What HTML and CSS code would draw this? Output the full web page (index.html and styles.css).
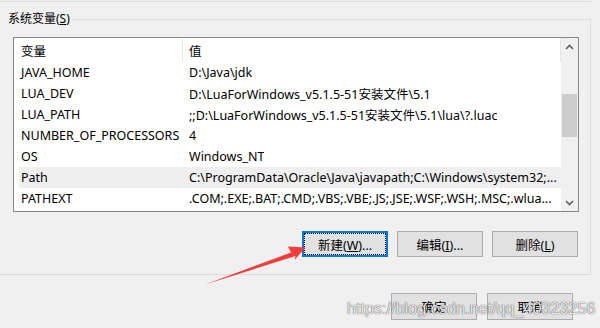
FILE: index.html
```html
<!DOCTYPE html>
<html lang="zh-CN">
<head>
    <meta charset="UTF-8">
    <title>环境变量</title>
    <link rel="stylesheet" href="styles.css">
</head>
<body>
    <div class="prev-group"></div>

    <fieldset class="group">
        <legend>系统变量(<u>S</u>)</legend>

        <div class="list">
            <div class="table">
                <div class="row head">
                    <div class="cell name">变量</div>
                    <div class="cell value">值</div>
                </div>
                <div class="row">
                    <div class="cell name">JAVA_HOME</div>
                    <div class="cell value">D:\Java\jdk</div>
                </div>
                <div class="row">
                    <div class="cell name">LUA_DEV</div>
                    <div class="cell value">D:\LuaForWindows_v5.1.5-51安装文件\5.1</div>
                </div>
                <div class="row">
                    <div class="cell name">LUA_PATH</div>
                    <div class="cell value">;;D:\LuaForWindows_v5.1.5-51安装文件\5.1\lua\?.luac</div>
                </div>
                <div class="row">
                    <div class="cell name">NUMBER_OF_PROCESSORS</div>
                    <div class="cell value">4</div>
                </div>
                <div class="row">
                    <div class="cell name">OS</div>
                    <div class="cell value">Windows_NT</div>
                </div>
                <div class="row selected">
                    <div class="cell name">Path</div>
                    <div class="cell value">C:\ProgramData\Oracle\Java\javapath;C:\Windows\system32;...</div>
                </div>
                <div class="row">
                    <div class="cell name">PATHEXT</div>
                    <div class="cell value">.COM;.EXE;.BAT;.CMD;.VBS;.VBE;.JS;.JSE;.WSF;.WSH;.MSC;.wlua...</div>
                </div>
            </div>

            <div class="scrollbar">
                <div class="arrow">
                    <svg width="9" height="6" viewBox="0 0 9 6"><polyline points="1,5 4.5,1.5 8,5" fill="none" stroke="#606060" stroke-width="1.6"/></svg>
                </div>
                <div class="track">
                    <div class="thumb"></div>
                </div>
                <div class="arrow">
                    <svg width="9" height="6" viewBox="0 0 9 6"><polyline points="1,1 4.5,4.5 8,1" fill="none" stroke="#606060" stroke-width="1.6"/></svg>
                </div>
            </div>
        </div>

        <div class="buttons">
            <button class="btn focused">新建(<u>W</u>)...</button>
            <button class="btn">编辑(<u>I</u>)...</button>
            <button class="btn">删除(<u>L</u>)</button>
        </div>
    </fieldset>

    <div class="footer">
        <button class="btn">确定</button>
        <button class="btn">取消</button>
    </div>

    <!-- annotation drawn on top of the screenshot -->
    <svg class="arrow-mark" width="600" height="328" viewBox="0 0 600 328">
        <polygon points="205,284.5 291,252.5 288,246.5 305.5,247.5 294.5,260 295.5,256" fill="#f23b3b"/>
    </svg>
    <div class="watermark">https://blog.csdn.net/qq_40323256</div>
</body>
</html>
```

FILE: styles.css
```css
body {
    margin: 0;
    width: 600px;
    height: 328px;
    overflow: hidden;
    position: relative;
    background-color: #f0f0f0;
    font-family: "Noto Sans", "Noto Sans CJK SC", sans-serif;
    font-size: 12px;
    color: #000;
}
.prev-group {
    width: 590px;
    height: 1px;
    border-bottom: 1px solid #dcdcdc;
    border-right: 1px solid #dcdcdc;
}
.group {
    box-sizing: border-box;
    width: 595px;
    margin: 9px 0 0 -4px;
    padding: 0 12px 17px 0;
    border: 1px solid #dcdcdc;
    min-width: 0;
}
.group legend {
    padding: 0 2px 0 11px;
    line-height: 16px;
}
.list {
    box-sizing: border-box;
    width: 566px;
    height: 175px;
    margin: 10px 0 0 16px;
    border: 1px solid #828790;
    background-color: #fff;
    display: flex;
}
.table {
    flex: 1;
    overflow: hidden;
    font-size: 12.5px;
}
.row {
    display: flex;
    height: 21px;
    margin-left: 5px;
    align-items: center;
    white-space: nowrap;
}
.row.head {
    height: 24px;
    align-items: stretch;
    border-right: 1px solid #e5e5e5;
}
.row.head .cell {
    display: flex;
    align-items: center;
}
.row.head .name {
    border-right: 1px solid #e5e5e5;
    margin: 1px 0;
}
.row.selected {
    background-color: #efefef;
}
.cell.name {
    box-sizing: border-box;
    width: 164px;
    padding-left: 2px;
    flex-shrink: 0;
}
.cell.value {
    padding-left: 6px;
    overflow: hidden;
}
.scrollbar {
    width: 17px;
    background-color: #f0f0f0;
    display: flex;
    flex-direction: column;
}
.arrow {
    height: 17px;
    display: flex;
    align-items: center;
    justify-content: center;
}
.track {
    flex: 1;
}
.thumb {
    margin: 39px 1px 0 1px;
    height: 43px;
    background-color: #cdcdcd;
}
.buttons {
    display: flex;
    justify-content: flex-end;
    gap: 9px;
    margin-top: 19px;
}
.btn {
    box-sizing: border-box;
    width: 86px;
    height: 26px;
    padding: 0;
    border: 1px solid #adadad;
    background-color: #e1e1e1;
    font-family: "Noto Sans", "Noto Sans CJK SC", sans-serif;
    font-size: 12.5px;
    color: #000;
}
.btn.focused {
    border: 2px solid #0078d7;
    outline: 1px dotted #000;
    outline-offset: -3px;
}
.footer {
    display: flex;
    justify-content: flex-end;
    gap: 10px;
    margin-top: 18px;
    padding-right: 27px;
}
.footer .btn {
    width: 86px;
    height: 27px;
}
.arrow-mark {
    position: absolute;
    left: 0;
    top: 0;
}
.watermark {
    position: absolute;
    left: 347px;
    top: 299px;
    font-family: "Liberation Sans", Arial, sans-serif;
    font-size: 16.2px;
    color: rgba(255, 255, 255, 0.9);
    text-shadow: 0 0 1px rgba(0, 0, 0, 0.7), 0 0 1px rgba(0, 0, 0, 0.4);
    white-space: nowrap;
}
```
